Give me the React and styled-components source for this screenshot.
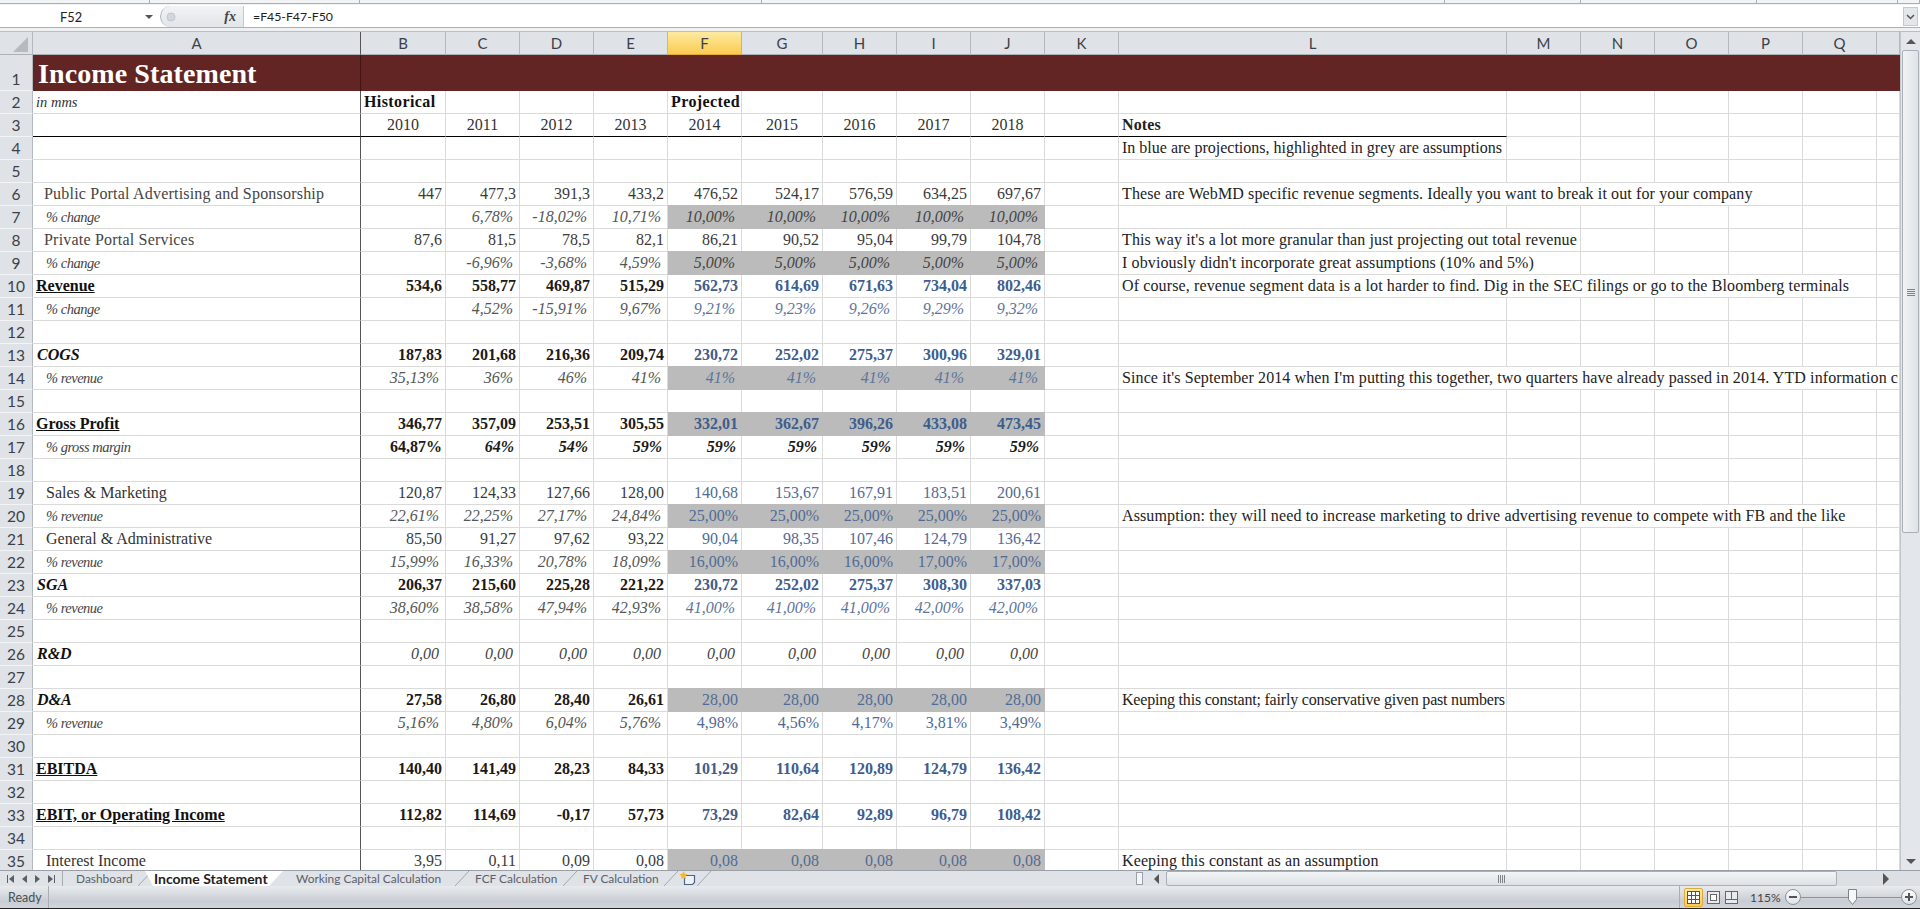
import React from 'react';
import styled, { createGlobalStyle, css } from 'styled-components';

const SERIF = `'Liberation Serif', 'Times New Roman', serif`;
const UI = `Lato, 'Open Sans', sans-serif`;
const COLS = '33px 328px 85px 74px 74px 74px 74px 81px 74px 74px 74px 74px 388px 74px 74px 74px 74px 74px 23px';
const GRID = '#dadada';
const SHADE = '#bbbbbb';

const GlobalStyle = createGlobalStyle`
  html, body {
    margin: 0;
    padding: 0;
    background: #e9ecef;
  }
  * { box-sizing: border-box; }
`;

const Window = styled.div`
  width: 1920px;
  height: 909px;
  display: flex;
  flex-direction: column;
  overflow: hidden;
  font-family: ${UI};
`;

/* ribbon leftovers above the formula bar */
const RibbonEdge = styled.div`
  height: 6px;
  display: flex;
  background: #f1f3f5;
  border-bottom: 1px solid #fff;
`;

const RibbonGroup = styled.div`
  width: ${p => p.$width}px;
  height: 4px;
  border-bottom: 1px solid #a9afb6;
  border-right: 1px solid #a9afb6;
`;

const FormulaBar = styled.div`
  height: 22px;
  display: flex;
  align-items: stretch;
  background: #fff;
  border-bottom: 1px solid #abb0b7;
`;

const NameBox = styled.div`
  width: 160px;
  padding: 0 7px 0 60px;
  display: flex;
  align-items: center;
  justify-content: space-between;
  font-size: 12.8px;
  color: #222;
`;

const FxGroup = styled.div`
  width: 84px;
  display: flex;
  align-items: center;
  justify-content: space-between;
  padding: 0 7px 0 5px;
  background: linear-gradient(#f1f3f5, #e2e5e9);
  border-left: 1px solid #aeb3ba;
  border-right: 1px solid #c5c9ce;
  border-radius: 12px 0 0 12px;
`;

const FxLabel = styled.span`
  font: italic bold 14px ${SERIF};
  color: #444;
`;

const FormulaText = styled.div`
  flex: 1;
  padding-left: 9px;
  display: flex;
  align-items: center;
  font-size: 12.3px;
  color: #222;
`;

const ExpandButton = styled.div`
  width: 15px;
  margin: 1px 2px 1px 0;
  display: flex;
  align-items: center;
  justify-content: center;
  background: #e4e7ea;
  border: 1px solid #c6cace;
`;

const BarGap = styled.div`
  height: 4px;
  background: #eef0f2;
  border-bottom: 1px solid #b9bec4;
`;

const SheetArea = styled.div`
  flex: 1;
  display: flex;
  min-height: 0;
`;

const Sheet = styled.div`
  width: 1900px;
  overflow: hidden;
  background: #fff;
`;

const Row = styled.div`
  display: grid;
  grid-template-columns: ${COLS};
  height: ${p => p.$height || 23}px;
  font-family: ${SERIF};
  font-size: 16px;
`;

const HeaderCorner = styled.div`
  position: relative;
  background: #dfe3e8;
  border-right: 1px solid #b4b9c0;
  border-bottom: 1px solid #adb2b9;
`;

const CornerMark = styled.svg`
  position: absolute;
  right: 4px;
  bottom: 2px;
`;

const ColHead = styled.div`
  display: flex;
  align-items: center;
  justify-content: center;
  font: 15px ${UI};
  color: #3c4148;
  background: ${p => (p.$active ? 'linear-gradient(#fdeaa0, #fbcb52)' : '#dfe3e8')};
  border-right: 1px solid ${p => (p.$dark ? '#555' : p.$active ? '#e2b14a' : '#b4b9c0')};
  border-bottom: 1px solid ${p => (p.$active ? '#e2a83a' : '#adb2b9')};
`;

const RowHead = styled.div`
  display: flex;
  align-items: ${p => (p.$tall ? 'flex-end' : 'center')};
  justify-content: center;
  padding-bottom: ${p => (p.$tall ? '2px' : '0')};
  font: 15.5px ${UI};
  color: #3c4148;
  background: #dfe3e8;
  border-right: 1px solid #b4b9c0;
  border-bottom: 1px solid #f3f4f6;
`;

const Cell = styled.div`
  display: flex;
  align-items: center;
  white-space: nowrap;
  overflow: hidden;
  border-right: 1px solid ${p => (p.$dark ? '#555' : GRID)};
  border-bottom: 1px solid ${p => (p.$rule ? '#000' : GRID)};
`;

const labelKinds = {
  title: css`padding: 2px 0 0 5px; font-size: 28px; font-weight: bold; letter-spacing: 0.1px; color: #fff;`,
  unit: css`padding-left: 3px; font-size: 14.5px; font-style: italic; color: #333;`,
  item: css`padding-left: 11px; letter-spacing: 0.2px; color: #444;`,
  itemDeep: css`padding-left: 13px; color: #333;`,
  sub: css`padding-left: 13px; font-size: 14.5px; letter-spacing: -0.5px; font-style: italic; color: #444;`,
  total: css`padding-left: 3px; font-weight: bold; color: #111; text-decoration: underline;`,
  head: css`padding-left: 4px; font-weight: bold; font-style: italic; color: #111;`,
};

const LabelCell = styled(Cell)`
  ${p => labelKinds[p.$kind]}
`;

const numKinds = {
  plain: css`color: #3a3a3a;`,
  it: css`color: #555; font-style: italic; padding-right: 6px;`,
  bold: css`color: #1a1a1a; font-weight: bold;`,
  boldit: css`color: #1a1a1a; font-weight: bold; font-style: italic; padding-right: 5px;`,
  blue: css`color: #4f6b96;`,
  blueit: css`color: #5d7599; font-style: italic; padding-right: 6px;`,
  bluebold: css`color: #3f5d8c; font-weight: bold;`,
  darkit: css`color: #444; font-style: italic; padding-right: 6px;`,
};

const NumCell = styled(Cell)`
  justify-content: flex-end;
  padding-right: 3px;
  ${p => numKinds[p.$kind]}
  ${p => p.$shade && css`
    background: ${SHADE};
    border-color: ${SHADE};
    box-shadow: 0 -1px 0 ${SHADE};
  `}
`;

const YearCell = styled(Cell)`
  justify-content: center;
  color: #333;
`;

const GroupCell = styled(Cell)`
  padding-left: 3px;
  font-weight: bold;
  letter-spacing: 0.4px;
  color: #111;
`;

const NoteCell = styled(Cell)`
  grid-column: span ${p => p.$span || 1};
  padding-left: 3px;
  color: #222;
  letter-spacing: ${p => p.$tracking ?? 0.12}px;
  font-weight: ${p => (p.$bold ? 'bold' : 'normal')};
`;

const TitleBand = styled.div`
  grid-column: 3 / -1;
  background: #632523;
`;

const TitleCell = styled(LabelCell)`
  background: #632523;
  border-bottom: none;
  border-right-color: #3f1514;
`;

const VScroll = styled.div`
  width: 20px;
  display: flex;
  flex-direction: column;
  align-items: center;
  background: #e3e6ea;
  border-left: 1px solid #c3c7cc;
`;

const ScrollArrow = styled.div`
  height: ${p => p.$size}px;
  display: flex;
  align-items: center;
  justify-content: center;
`;

const VThumb = styled.div`
  width: 17px;
  height: 483px;
  display: flex;
  align-items: flex-end;
  justify-content: center;
  padding-bottom: 236px;
  background: linear-gradient(90deg, #f1f3f5, #dfe3e7);
  border: 1px solid #a9afb6;
  border-radius: 2px;
`;

const VSpacer = styled.div`
  flex: 1;
`;

const GripLines = styled.svg`
  display: block;
`;

const BottomBar = styled.div`
  height: 16px;
  display: flex;
  background: #dfe3e8;
  border-top: 1px solid #9aa0a8;
`;

const TabNav = styled.div`
  width: 63px;
  padding: 0 6px 0 7px;
  display: flex;
  align-items: center;
  justify-content: space-between;
  border-right: 1px solid #a7acb3;
`;

const Tab = styled.div`
  position: relative;
  width: ${p => p.$width}px;
  padding-left: ${p => (p.$active ? 9 : p.$pad || 13)}px;
  display: flex;
  align-items: center;
  font-size: ${p => (p.$active ? 14 : 11.9)}px;
  color: ${p => (p.$active ? '#222' : '#5b6068')};
  font-weight: ${p => (p.$active ? 'bold' : 'normal')};
  background: ${p => (p.$active ? '#fff' : 'transparent')};
  clip-path: ${p => (p.$active ? 'polygon(0 0, 100% 0, calc(100% - 14px) 100%, 8px 100%)' : 'none')};
  white-space: nowrap;
`;

const TabSlant = styled.svg`
  position: absolute;
  right: -7px;
  top: 0;
`;

const ScrollSpacer = styled.div`
  flex: 1;
`;

const Splitter = styled.div`
  width: 7px;
  margin: 1px 4px 1px 0;
  background: #f4f5f7;
  border: 1px solid #9aa0a8;
`;

const HArrow = styled.div`
  width: ${p => p.$size}px;
  display: flex;
  align-items: center;
  justify-content: center;
`;

const HThumb = styled.div`
  width: 671px;
  display: flex;
  align-items: center;
  justify-content: center;
  background: linear-gradient(#f3f5f7, #dde1e6);
  border: 1px solid #a9afb6;
  border-radius: 2px;
`;

const HTrack = styled.div`
  width: 83px;
  padding-left: 46px;
  display: flex;
  align-items: center;
  background: #dce0e5;
`;

const StatusBar = styled.div`
  height: 23px;
  display: flex;
  align-items: center;
  font-size: 12.5px;
  color: #4a4f56;
  background: linear-gradient(#e9ebee, #c8cdd3 70%, #d3d7dc);
  border-bottom: 1px solid #222;
`;

const StatusText = styled.div`
  width: 49px;
  height: 100%;
  padding-left: 8px;
  display: flex;
  align-items: center;
  border-right: 1px solid #a9aeb5;
`;

const StatusRight = styled.div`
  margin-left: auto;
  width: 241px;
  height: 100%;
  padding-left: 4px;
  display: flex;
  align-items: center;
  border-left: 1px solid #a9aeb5;
`;

const ViewButton = styled.div`
  width: ${p => p.$width}px;
  height: 19px;
  display: flex;
  align-items: center;
  justify-content: center;
  background: ${p => (p.$active ? 'linear-gradient(#fdeaa0, #fbcb52)' : 'transparent')};
  border: ${p => (p.$active ? '1px solid #e0a93c' : 'none')};
  border-radius: 2px;
`;

const ZoomLabel = styled.div`
  width: 46px;
  padding-left: 11px;
  font-size: 12px;
  color: #444;
`;

const ZoomCircle = styled.div`
  width: 16px;
  height: 16px;
  display: flex;
  align-items: center;
  justify-content: center;
  background: linear-gradient(#fbfcfd, #dfe3e8);
  border: 1px solid #8d939b;
  border-radius: 50%;
`;

const ZoomTrack = styled.div`
  position: relative;
  width: 100px;
  height: 1px;
  background: #8d939b;
`;

const ZoomThumb = styled.svg`
  position: absolute;
  left: 47px;
  top: -8px;
`;

const cells = (kind, values, shade) => values.map(text => ({ text, kind, shade }));

const rows = [
  { n: 4, note: 'In blue are projections, highlighted in grey are assumptions', tracking: 0 },
  { n: 5 },
  {
    n: 6, label: 'Public Portal Advertising and Sponsorship', labelKind: 'item',
    values: [...cells('plain', ['447', '477,3', '391,3', '433,2', '476,52', '524,17', '576,59', '634,25', '697,67'])],
    note: 'These are WebMD specific revenue segments. Ideally you want to break it out for your company', span: 5,
  },
  {
    n: 7, label: '% change', labelKind: 'sub',
    values: [...cells('it', ['', '6,78%', '-18,02%', '10,71%']), ...cells('darkit', ['10,00%', '10,00%', '10,00%', '10,00%', '10,00%'], true)],
  },
  {
    n: 8, label: 'Private Portal Services', labelKind: 'item',
    values: [...cells('plain', ['87,6', '81,5', '78,5', '82,1', '86,21', '90,52', '95,04', '99,79', '104,78'])],
    note: "This way it's a lot more granular than just projecting out total revenue", span: 2,
  },
  {
    n: 9, label: '% change', labelKind: 'sub',
    values: [...cells('it', ['', '-6,96%', '-3,68%', '4,59%']), ...cells('darkit', ['5,00%', '5,00%', '5,00%', '5,00%', '5,00%'], true)],
    note: "I obviously didn't incorporate great assumptions (10% and 5%)", span: 2,
  },
  {
    n: 10, label: 'Revenue', labelKind: 'total',
    values: [...cells('bold', ['534,6', '558,77', '469,87', '515,29']), ...cells('bluebold', ['562,73', '614,69', '671,63', '734,04', '802,46'])],
    note: 'Of course, revenue segment data is a lot harder to find. Dig in the SEC filings or go to the Bloomberg terminals', span: 6,
  },
  {
    n: 11, label: '% change', labelKind: 'sub',
    values: [...cells('it', ['', '4,52%', '-15,91%', '9,67%']), ...cells('blueit', ['9,21%', '9,23%', '9,26%', '9,29%', '9,32%'])],
  },
  { n: 12 },
  {
    n: 13, label: 'COGS', labelKind: 'head',
    values: [...cells('bold', ['187,83', '201,68', '216,36', '209,74']), ...cells('bluebold', ['230,72', '252,02', '275,37', '300,96', '329,01'])],
  },
  {
    n: 14, label: '% revenue', labelKind: 'sub',
    values: [...cells('it', ['35,13%', '36%', '46%', '41%']), ...cells('blueit', ['41%', '41%', '41%', '41%', '41%'], true)],
    note: "Since it's September 2014 when I'm putting this together, two quarters have already passed in 2014. YTD information c", span: 7, tracking: 0.1,
  },
  { n: 15 },
  {
    n: 16, label: 'Gross Profit', labelKind: 'total',
    values: [...cells('bold', ['346,77', '357,09', '253,51', '305,55']), ...cells('bluebold', ['332,01', '362,67', '396,26', '433,08', '473,45'], true)],
  },
  {
    n: 17, label: '% gross margin', labelKind: 'sub',
    values: [...cells('bold', ['64,87%']), ...cells('boldit', ['64%', '54%', '59%', '59%', '59%', '59%', '59%', '59%'])],
  },
  { n: 18 },
  {
    n: 19, label: 'Sales & Marketing', labelKind: 'itemDeep',
    values: [...cells('plain', ['120,87', '124,33', '127,66', '128,00']), ...cells('blue', ['140,68', '153,67', '167,91', '183,51', '200,61'])],
  },
  {
    n: 20, label: '% revenue', labelKind: 'sub',
    values: [...cells('it', ['22,61%', '22,25%', '27,17%', '24,84%']), ...cells('blue', ['25,00%', '25,00%', '25,00%', '25,00%', '25,00%'], true)],
    note: 'Assumption: they will need to increase marketing to drive advertising revenue to compete with FB and the like', span: 6,
  },
  {
    n: 21, label: 'General & Administrative', labelKind: 'itemDeep',
    values: [...cells('plain', ['85,50', '91,27', '97,62', '93,22']), ...cells('blue', ['90,04', '98,35', '107,46', '124,79', '136,42'])],
  },
  {
    n: 22, label: '% revenue', labelKind: 'sub',
    values: [...cells('it', ['15,99%', '16,33%', '20,78%', '18,09%']), ...cells('blue', ['16,00%', '16,00%', '16,00%', '17,00%', '17,00%'], true)],
  },
  {
    n: 23, label: 'SGA', labelKind: 'head',
    values: [...cells('bold', ['206,37', '215,60', '225,28', '221,22']), ...cells('bluebold', ['230,72', '252,02', '275,37', '308,30', '337,03'])],
  },
  {
    n: 24, label: '% revenue', labelKind: 'sub',
    values: [...cells('it', ['38,60%', '38,58%', '47,94%', '42,93%']), ...cells('blueit', ['41,00%', '41,00%', '41,00%', '42,00%', '42,00%'])],
  },
  { n: 25 },
  {
    n: 26, label: 'R&D', labelKind: 'head',
    values: cells('darkit', ['0,00', '0,00', '0,00', '0,00', '0,00', '0,00', '0,00', '0,00', '0,00']),
  },
  { n: 27 },
  {
    n: 28, label: 'D&A', labelKind: 'head',
    values: [...cells('bold', ['27,58', '26,80', '28,40', '26,61']), ...cells('blue', ['28,00', '28,00', '28,00', '28,00', '28,00'], true)],
    note: 'Keeping this constant; fairly conservative given past numbers', tracking: -0.2,
  },
  {
    n: 29, label: '% revenue', labelKind: 'sub',
    values: [...cells('it', ['5,16%', '4,80%', '6,04%', '5,76%']), ...cells('blue', ['4,98%', '4,56%', '4,17%', '3,81%', '3,49%'])],
  },
  { n: 30 },
  {
    n: 31, label: 'EBITDA', labelKind: 'total',
    values: [...cells('bold', ['140,40', '141,49', '28,23', '84,33']), ...cells('bluebold', ['101,29', '110,64', '120,89', '124,79', '136,42'])],
  },
  { n: 32 },
  {
    n: 33, label: 'EBIT, or Operating Income', labelKind: 'total',
    values: [...cells('bold', ['112,82', '114,69', '-0,17', '57,73']), ...cells('bluebold', ['73,29', '82,64', '92,89', '96,79', '108,42'])],
  },
  { n: 34 },
  {
    n: 35, label: 'Interest Income', labelKind: 'itemDeep',
    values: [...cells('plain', ['3,95', '0,11', '0,09', '0,08']), ...cells('blue', ['0,08', '0,08', '0,08', '0,08', '0,08'], true)],
    note: 'Keeping this constant as an assumption',
  },
];

const columns = ['A', 'B', 'C', 'D', 'E', 'F', 'G', 'H', 'I', 'J', 'K', 'L', 'M', 'N', 'O', 'P', 'Q', ''];
const years = ['2010', '2011', '2012', '2013', '2014', '2015', '2016', '2017', '2018'];
const emptyValues = Array(9).fill({ text: '', kind: 'plain' });

const tabs = [
  { name: 'Dashboard', width: 82 },
  { name: 'Income Statement', width: 138, active: true },
  { name: 'Working Capital Calculation', width: 179 },
  { name: 'FCF Calculation', width: 108 },
  { name: 'FV Calculation', width: 101 },
];

function Triangle({ dir, size = 4, color = '#555' }) {
  const points = {
    up: `0,${size} ${size},0 ${size * 2},${size}`,
    down: `0,0 ${size * 2},0 ${size},${size}`,
  };
  return (
    <svg width={size * 2} height={size}>
      <polygon points={points[dir]} fill={color} />
    </svg>
  );
}

function SideTriangle({ dir, size = 5, color = '#555' }) {
  const points = dir === 'left'
    ? `${size},0 ${size},${size * 2} 0,${size}`
    : `0,0 ${size},${size} 0,${size * 2}`;
  return (
    <svg width={size} height={size * 2}>
      <polygon points={points} fill={color} />
    </svg>
  );
}

function NavIcon({ dir, stop }) {
  const tri = dir === 'left' ? '7,1 7,9 2,5' : '1,1 1,9 6,5';
  return (
    <svg width="9" height="10">
      <polygon points={tri} fill="#5b6068" />
      {stop && <rect x={dir === 'left' ? 0 : 7} y="1" width="1" height="8" fill="#5b6068" />}
    </svg>
  );
}

function NewSheetIcon() {
  return (
    <svg width="18" height="15" viewBox="0 0 18 15">
      <path d="M5.500 4.500h10v7l-2 2h-8z" fill="#eef2f7" stroke="#4c6386" strokeWidth="1.2" />
      <path d="M4.500 0l1.300 2.700 2.700.5-2 2 .5 2.800-2.500-1.300L2 8l.5-2.800-2-2 2.700-.5z" fill="#f2b92f" />
    </svg>
  );
}

function Grip({ vertical }) {
  const lines = [0, 2, 4, 6];
  return (
    <GripLines width={vertical ? 8 : 7} height={vertical ? 7 : 8}>
      {lines.map(v => (vertical
        ? <rect key={v} x="0" y={v} width="8" height="1" fill="#7d838b" />
        : <rect key={v} x={v} y="0" width="1" height="8" fill="#7d838b" />))}
    </GripLines>
  );
}

function SheetRow({ row }) {
  const values = row.values || emptyValues;
  const span = row.span || 1;
  return (
    <Row>
      <RowHead>{row.n}</RowHead>
      <LabelCell $kind={row.labelKind || 'unit'} $dark>{row.label}</LabelCell>
      {values.map((cell, i) => (
        <NumCell key={i} $kind={cell.kind} $shade={cell.shade}>{cell.text}</NumCell>
      ))}
      <Cell />
      <NoteCell $span={span} $tracking={row.tracking}>{row.note}</NoteCell>
      {Array.from({ length: 7 - span }).map((_, i) => <Cell key={i} />)}
    </Row>
  );
}

function TabSeparator() {
  return (
    <TabSlant width="14" height="15">
      <line x1="0" y1="15" x2="14" y2="0" stroke="#a2a8af" />
    </TabSlant>
  );
}

function App() {
  return (
    <Window>
      <GlobalStyle />
      <RibbonEdge>
        <RibbonGroup $width={150} />
        <RibbonGroup $width={210} />
        <RibbonGroup $width={402} />
        <RibbonGroup $width={683} />
        <RibbonGroup $width={136} />
        <RibbonGroup $width={176} />
        <RibbonGroup $width={141} />
        <RibbonGroup $width={22} />
      </RibbonEdge>

      <FormulaBar>
        <NameBox>
          F52
          <Triangle dir="down" />
        </NameBox>
        <FxGroup>
          <svg width="10" height="10">
            <circle cx="5" cy="5" r="4" fill="#d3d7dc" stroke="#c2c6cc" />
          </svg>
          <FxLabel>fx</FxLabel>
        </FxGroup>
        <FormulaText>=F45-F47-F50</FormulaText>
        <ExpandButton>
          <svg width="9" height="6">
            <path d="M1 1l3.500 3.500L8 1" fill="none" stroke="#555" strokeWidth="1.5" />
          </svg>
        </ExpandButton>
      </FormulaBar>
      <BarGap />

      <SheetArea>
        <Sheet>
          <Row>
            <HeaderCorner>
              <CornerMark width="15" height="15">
                <polygon points="15,0 15,15 0,15" fill="#b6bbc2" />
              </CornerMark>
            </HeaderCorner>
            {columns.map((c, i) => (
              <ColHead key={i} $active={c === 'F'} $dark={c === 'A'}>{c}</ColHead>
            ))}
          </Row>

          <Row $height={36}>
            <RowHead $tall>1</RowHead>
            <TitleCell $kind="title" $dark>Income Statement</TitleCell>
            <TitleBand />
          </Row>

          <Row>
            <RowHead>2</RowHead>
            <LabelCell $kind="unit" $dark>in mms</LabelCell>
            {years.map((y, i) => (
              i === 0 || i === 4
                ? <GroupCell key={y}>{i === 0 ? 'Historical' : 'Projected'}</GroupCell>
                : <Cell key={y} />
            ))}
            {Array.from({ length: 8 }).map((_, i) => <Cell key={i} />)}
          </Row>

          <Row>
            <RowHead>3</RowHead>
            <Cell $dark $rule />
            {years.map(y => <YearCell key={y} $rule>{y}</YearCell>)}
            <Cell $rule />
            <NoteCell $rule $bold>Notes</NoteCell>
            {Array.from({ length: 6 }).map((_, i) => <Cell key={i} />)}
          </Row>

          {rows.map(row => <SheetRow key={row.n} row={row} />)}
        </Sheet>

        <VScroll>
          <ScrollArrow $size={18}><Triangle dir="up" size={5} /></ScrollArrow>
          <VThumb><Grip vertical /></VThumb>
          <VSpacer />
          <ScrollArrow $size={18}><Triangle dir="down" size={5} /></ScrollArrow>
        </VScroll>
      </SheetArea>

      <BottomBar>
        <TabNav>
          <NavIcon dir="left" stop />
          <NavIcon dir="left" />
          <NavIcon dir="right" />
          <NavIcon dir="right" stop />
        </TabNav>
        {tabs.map(tab => (
          <Tab key={tab.name} $width={tab.width} $active={tab.active}>
            {tab.name}
            {!tab.active && <TabSeparator />}
          </Tab>
        ))}
        <Tab $width={33} $pad={8}>
          <NewSheetIcon />
          <TabSeparator />
        </Tab>
        <ScrollSpacer />
        <Splitter />
        <HArrow $size={19}><SideTriangle dir="left" /></HArrow>
        <HThumb><Grip /></HThumb>
        <HTrack><SideTriangle dir="right" size={6} /></HTrack>
      </BottomBar>

      <StatusBar>
        <StatusText>Ready</StatusText>
        <StatusRight>
          <ViewButton $width={19} $active>
            <svg width="13" height="13">
              <rect x=".5" y=".5" width="12" height="12" fill="#fff" stroke="#555" />
              <path d="M4.500 0v13M8.500 0v13M0 4.500h13M0 8.500h13" stroke="#555" />
            </svg>
          </ViewButton>
          <ViewButton $width={20}>
            <svg width="13" height="13">
              <rect x=".5" y=".5" width="12" height="12" fill="#e8eaed" stroke="#666" />
              <rect x="3.500" y="3.500" width="6" height="6" fill="#fff" stroke="#666" />
            </svg>
          </ViewButton>
          <ViewButton $width={16}>
            <svg width="13" height="13">
              <rect x=".5" y=".5" width="12" height="12" fill="#e8eaed" stroke="#666" />
              <path d="M6.500 0v8M0 8.500h13" stroke="#666" />
            </svg>
          </ViewButton>
          <ZoomLabel>115%</ZoomLabel>
          <ZoomCircle>
            <svg width="8" height="2"><rect width="8" height="2" fill="#555" /></svg>
          </ZoomCircle>
          <ZoomTrack>
            <ZoomThumb width="9" height="17">
              <path d="M.5.500h8v10l-4 5-4-5z" fill="#f6f7f9" stroke="#7d838b" />
            </ZoomThumb>
          </ZoomTrack>
          <ZoomCircle>
            <svg width="8" height="8">
              <path d="M0 3h8v2H0zM3 0h2v8H3z" fill="#555" />
            </svg>
          </ZoomCircle>
        </StatusRight>
      </StatusBar>
    </Window>
  );
}

export default App;
